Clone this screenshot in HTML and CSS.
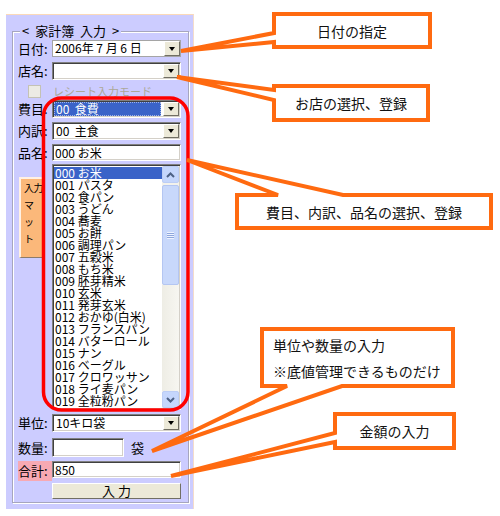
FILE: index.html
```html
<!DOCTYPE html>
<html lang="ja">
<head>
<meta charset="utf-8">
<title>家計簿 入力</title>
<link rel="stylesheet" href="styles.css">
</head>
<body>
<div class="panel">
  <div class="group">
    <div class="legend">&lt; 家計簿 入力 &gt;</div>

    <div class="row r-date">
      <span class="lbl">日付:</span>
      <div class="combo flat"><span class="val">2006年 7 月 6 日</span><span class="drop"></span></div>
    </div>

    <div class="row r-shop">
      <span class="lbl">店名:</span>
      <div class="combo"><span class="val"></span><span class="drop"></span></div>
    </div>

    <div class="row r-check">
      <span class="chkcell"><span class="chk"></span></span>
      <span class="chklbl">レシート入力モード</span>
    </div>

    <div class="row r-cat">
      <span class="lbl">費目:</span>
      <div class="combo"><span class="val sel">00&nbsp;&nbsp;食費</span><span class="drop"></span></div>
    </div>

    <div class="row r-sub">
      <span class="lbl">内訳:</span>
      <div class="combo"><span class="val">00&nbsp;&nbsp;主食</span><span class="drop"></span></div>
    </div>

    <div class="row r-name">
      <span class="lbl">品名:</span>
      <div class="field">000 お米</div>
    </div>

    <div class="row r-list">
      <div class="side"><div class="mat">入力<br>マ<br>ッ<br>ト</div></div>
      <div class="listbox">
        <ul class="items">
          <li class="on">000 お米</li>
          <li>001 パスタ</li>
          <li>002 食パン</li>
          <li>003 うどん</li>
          <li>004 蕎麦</li>
          <li>005 お餅</li>
          <li>006 調理パン</li>
          <li>007 五穀米</li>
          <li>008 もち米</li>
          <li>009 胚芽精米</li>
          <li>010 玄米</li>
          <li>011 発芽玄米</li>
          <li>012 おかゆ(白米)</li>
          <li>013 フランスパン</li>
          <li>014 バターロール</li>
          <li>015 ナン</li>
          <li>016 ベーグル</li>
          <li>017 クロワッサン</li>
          <li>018 ライ麦パン</li>
          <li>019 全粒粉パン</li>
        </ul>
        <div class="sbar">
          <div class="sbtn"><svg width="9" height="6" viewBox="0 0 9 6"><polyline points="1,5 4.5,1.5 8,5" fill="none" stroke="#4d6185" stroke-width="2"/></svg></div>
          <div class="thumb"><span class="grip"></span></div>
          <div class="track"></div>
          <div class="sbtn"><svg width="9" height="6" viewBox="0 0 9 6"><polyline points="1,1 4.5,4.5 8,1" fill="none" stroke="#4d6185" stroke-width="2"/></svg></div>
        </div>
      </div>
    </div>

    <div class="row r-unit">
      <span class="lbl">単位:</span>
      <div class="combo"><span class="val">10キロ袋</span><span class="drop"></span></div>
    </div>

    <div class="row r-qty">
      <span class="lbl">数量:</span>
      <div class="qty"><div class="field short"></div><span class="suffix">袋</span></div>
    </div>

    <div class="row r-total">
      <span class="lbl pink">合計:</span>
      <div class="field">850</div>
    </div>

    <div class="row r-btn">
      <span></span>
      <div class="enter">入 力</div>
    </div>
  </div>
</div>

<div class="overlay">
  <svg class="marks" width="500" height="516" viewBox="0 0 500 516">
    <rect x="43.5" y="98" width="144.5" height="312" rx="18" ry="18" fill="none" stroke="#ff0000" stroke-width="3.5"/>
    <g fill="none" stroke="#ff6a10" stroke-width="4">
      <path d="M274,14 H430 V47 H274 V42 L181,51 L274,33 Z"/>
      <path d="M274,86 H428 V120 H274 V100 L177,77 L274,90 Z"/>
      <path d="M237,195 H278 L187,160 L343,195 H491 V228 H237 Z"/>
      <path d="M262,329 H453 V386 H342 L152,451 L287,386 H262 Z"/>
      <path d="M335,414 H454 V448 H335 V442 L171,476 L335,433 Z"/>
    </g>
  </svg>
  <div class="ann a1">日付の指定</div>
  <div class="ann a2">お店の選択、登録</div>
  <div class="ann a3">費目、内訳、品名の選択、登録</div>
  <div class="ann a4"><span>単位や数量の入力</span><span>※底値管理できるものだけ</span></div>
  <div class="ann a5">金額の入力</div>
</div>
</body>
</html>
```

FILE: styles.css
```css
html, body {
  margin: 0;
  padding: 0;
}
body {
  position: relative;
  width: 500px;
  height: 516px;
  overflow: hidden;
  background: #fff;
  font-family: "Noto Sans CJK JP", "Noto Sans", sans-serif;
  font-size: 12px;
  line-height: 14px;
  color: #000;
}

/* ---------- panel ---------- */
.panel {
  margin: 14px 0 0 6px;
  width: 188px;
  box-sizing: border-box;
  background: #ccccff;
  border-top: 1px solid #fbd9b8;
  border-right: 1px solid #f4dccb;
  padding-bottom: 6px;
  overflow: hidden;
}
.group {
  margin: 16px 0 0 6px;
  width: 177px;
  box-sizing: border-box;
  border: 1px solid #a6a6be;
  box-shadow: 1px 1px 0 #ffffff, inset 1px 1px 0 #ffffff;
  padding: 0 7px 3px 5px;
}
.legend {
  display: block;
  width: max-content;
  margin: -7px 0 0 2px;
  padding: 0 2px;
  background: #ccccff;
  font-size: 13px;
  line-height: 12px;
  height: 12px;
  word-spacing: 3px;
}

.row {
  display: grid;
  grid-template-columns: 34px 129px;
  align-items: center;
}
.lbl {
  font-size: 13px;
  line-height: 14px;
  white-space: nowrap;
}
.r-date { margin-top: 3px; }
.r-shop { margin-top: 5px; }
.r-check { margin-top: 5px; height: 13px; }
.r-cat { margin-top: 2px; }
.r-sub { margin-top: 4px; }
.r-name { margin-top: 4px; }
.r-list { margin-top: 3px; align-items: start; }
.r-unit { margin-top: 4px; }
.r-qty { margin-top: 6px; }
.r-total { margin-top: 4px; align-items: start; }
.r-btn { margin-top: 2px; }

/* ---------- combo boxes ---------- */
.combo {
  display: flex;
  height: 18px;
  box-sizing: border-box;
  background: #fff;
  border: 1px solid;
  border-color: #808080 #ffffff #ffffff #808080;
  box-shadow: inset 1px 1px 0 #404040, inset -1px -1px 0 #d4d0c8;
  padding: 1px;
}
.combo.flat {
  height: 17px;
  border-color: #a5a5a5;
  box-shadow: none;
  padding: 0;
}
.val {
  flex: 1;
  min-width: 0;
  padding-left: 2px;
  font-size: 12px;
  line-height: 14px;
  white-space: nowrap;
}
.val.sel {
  background: #3a63c8;
  color: #fff;
  margin-right: 2px;
  outline: 1px dotted #9fb3e8;
  outline-offset: -1px;
}
.drop {
  width: 16px;
  flex: none;
  box-sizing: border-box;
  background: #ece9d8;
  border: 1px solid;
  border-color: #ffffff #716f64 #716f64 #ffffff;
  display: flex;
  align-items: center;
  justify-content: center;
}
.drop::after {
  content: "";
  border-left: 3.5px solid transparent;
  border-right: 3.5px solid transparent;
  border-top: 4px solid #000;
}

/* ---------- text fields ---------- */
.field {
  height: 17px;
  box-sizing: border-box;
  background: #fff;
  border: 1px solid;
  border-color: #808080 #ffffff #ffffff #808080;
  box-shadow: inset 1px 1px 0 #404040, inset -1px -1px 0 #d4d0c8;
  padding: 1px 2px;
  font-size: 12px;
  line-height: 13px;
  white-space: nowrap;
}
.qty {
  display: flex;
  align-items: center;
  gap: 7px;
}
.field.short {
  width: 72px;
  height: 19px;
}
.suffix {
  font-size: 13px;
  line-height: 14px;
}
.pink {
  background: #f7a9b3;
  height: 20px;
  line-height: 20px;
}

/* ---------- checkbox ---------- */
.chkcell {
  display: flex;
}
.chk {
  width: 13px;
  height: 13px;
  box-sizing: border-box;
  margin-left: 10px;
  border: 1px solid #c4c2b4;
  background: #ecebe4;
}
.chklbl {
  padding-left: 1px;
  font-size: 11px;
  line-height: 13px;
  color: #aca899;
  white-space: nowrap;
}

/* ---------- list box ---------- */
.side {
  padding-top: 13px;
  padding-left: 1px;
}
.mat {
  width: 24px;
  height: 81px;
  box-sizing: border-box;
  background: #fbb87a;
  border: 1px solid;
  border-width: 2px 1px 1px 2px;
  border-color: #fff1e4 #8c7b6b #8c7b6b #fff1e4;
  font-size: 10px;
  letter-spacing: -0.5px;
  line-height: 17px;
  padding: 0 0 0 3px;
  white-space: nowrap;
}
.listbox {
  display: flex;
  height: 246px;
  box-sizing: border-box;
  background: #fff;
  border: 1px solid;
  border-color: #808080 #ffffff #ffffff #808080;
  box-shadow: inset 1px 1px 0 #404040, inset -1px -1px 0 #d4d0c8;
  padding: 1px;
}
.items {
  flex: 1;
  margin: 0;
  padding: 1px 0 0;
  list-style: none;
  overflow: hidden;
}
.items li {
  height: 12px;
  font-size: 12px;
  line-height: 12px;
  padding-left: 1px;
  white-space: nowrap;
}
.items li.on {
  background: #3a63c8;
  color: #fff;
}
.sbar {
  width: 17px;
  display: flex;
  flex-direction: column;
  background: #f3f2ec;
}
.sbtn {
  height: 17px;
  box-sizing: border-box;
  border: 1px solid #bccdf5;
  border-radius: 2px;
  background: #c5d6fc;
  display: flex;
  align-items: center;
  justify-content: center;
  flex: none;
}
.thumb {
  height: 100px;
  margin-top: 2px;
  box-sizing: border-box;
  border: 1px solid #b4c6f2;
  border-radius: 2px;
  background: #c8d8fb;
  display: flex;
  align-items: center;
  justify-content: center;
  flex: none;
}
.grip {
  width: 7px;
  height: 7px;
  background: repeating-linear-gradient(to bottom, #eef3ff 0 1px, #8ea6dc 1px 2px);
}
.track {
  flex: 1;
  background: linear-gradient(to right, #eeede5, #f7f6f1);
}

/* ---------- enter button ---------- */
.enter {
  height: 16px;
  box-sizing: border-box;
  background: #ece9d8;
  border: 1px solid;
  border-color: #ffffff #716f64 #716f64 #ffffff;
  font-size: 13px;
  line-height: 14px;
  text-align: center;
}

/* ---------- annotations ---------- */
.overlay {
  position: absolute;
  left: 0;
  top: 0;
  width: 500px;
  height: 516px;
  pointer-events: none;
}
.marks {
  position: absolute;
  left: 0;
  top: 0;
}
.ann {
  position: absolute;
  display: flex;
  align-items: center;
  justify-content: center;
  font-size: 14px;
  line-height: 18px;
  color: #111;
  white-space: nowrap;
}
.a1 { left: 272px; top: 12px; width: 160px; height: 37px; }
.a2 { left: 272px; top: 84px; width: 158px; height: 38px; }
.a3 { left: 235px; top: 193px; width: 258px; height: 37px; }
.a4 {
  left: 273px;
  top: 332px;
  flex-direction: column;
  align-items: flex-start;
  line-height: 26px;
}
.a5 { left: 333px; top: 412px; width: 123px; height: 38px; }
```
